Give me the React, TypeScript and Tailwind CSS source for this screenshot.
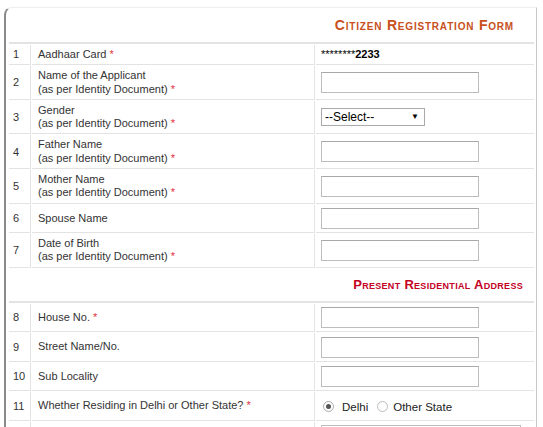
const rows = [
  { no: "1", label: ["Aadhaar Card"], req: true, kind: "text" },
  { no: "2", label: ["Name of the Applicant", "(as per Identity Document)"], req: true, kind: "input" },
  { no: "3", label: ["Gender", "(as per Identity Document)"], req: true, kind: "select" },
  { no: "4", label: ["Father Name", "(as per Identity Document)"], req: true, kind: "input" },
  { no: "5", label: ["Mother Name", "(as per Identity Document)"], req: true, kind: "input" },
  { no: "6", label: ["Spouse Name"], req: false, kind: "input" },
  { no: "7", label: ["Date of Birth", "(as per Identity Document)"], req: true, kind: "input" },
];

const addressRows = [
  { no: "8", label: ["House No."], req: true, kind: "input" },
  { no: "9", label: ["Street Name/No."], req: false, kind: "input" },
  { no: "10", label: ["Sub Locality"], req: false, kind: "input" },
  { no: "11", label: ["Whether Residing in Delhi or Other State?"], req: true, kind: "radio" },
];

type Row = (typeof rows)[number];

function Value({ kind }: { kind: string }) {
  if (kind === "text") {
    return (
      <span className="text-[11px] text-black">
        ********<b>2233</b>
      </span>
    );
  }
  if (kind === "select") {
    return (
      <div className="flex h-[18px] w-[104px] items-center justify-between border border-[#aaaaaa] bg-white pl-[3px] pr-[5px] text-[12px] text-black">
        <span>--Select--</span>
        <span className="text-[8px]">▼</span>
      </div>
    );
  }
  if (kind === "radio") {
    return (
      <div className="flex items-center pl-[2px] text-[11.5px] text-[#222]">
        <span className="flex h-[11px] w-[11px] items-center justify-center rounded-full border border-[#aaaaaa] bg-white">
          <span className="h-[5px] w-[5px] rounded-full bg-[#555]" />
        </span>
        <span className="ml-[8px] mt-[3px]">Delhi</span>
        <span className="ml-[9px] h-[11px] w-[11px] rounded-full border border-[#bbbbbb] bg-white" />
        <span className="ml-[5px] mt-[3px]">Other State</span>
      </div>
    );
  }
  return <div className="h-[21px] w-[158px] border border-[#bdbdbd] border-t-[#a8a8a8] bg-white" />;
}

function FormRow({ row }: { row: Row }) {
  const input = row.kind !== "text";
  return (
    <tr>
      <td className={`border-b border-r border-[#e3e3e3] pl-[4px] align-middle ${input ? "h-[28.5px]" : "h-[19px]"}`}>
        {row.no}
      </td>
      <td className="border-b border-r border-[#e3e3e3] py-[3px] pl-[6px] align-middle leading-[13.3px]">
        {row.label.map((l, i) => (
          <div key={l}>
            {l}
            {row.req && i === row.label.length - 1 && <span className="text-[#e0303f]"> *</span>}
          </div>
        ))}
      </td>
      <td className="border-b border-[#e3e3e3] pl-[5px] align-middle">
        <Value kind={row.kind} />
      </td>
    </tr>
  );
}

export default function App() {
  return (
    <div className="h-[427px] overflow-hidden bg-white pt-[7px] pl-[4px]" style={{ fontFamily: "'Liberation Sans', Arial, sans-serif" }}>
      <div className="w-[533px] rounded-tl-lg border-l-2 border-r border-t border-l-[#8a8a8a] border-r-[#c8c8c8] border-t-[#eeeeee] px-[2px]">
        <table className="w-[527px] border-separate border-spacing-[1px] text-[11px] text-[#333]">
          <colgroup>
            <col className="w-[22px]" />
            <col className="w-[283px]" />
            <col />
          </colgroup>
          <tbody>
            <tr>
              <td colSpan={3} className="h-[35px] border-b-2 border-[#e3e3e3] pr-[20px] text-right">
                <span className="text-[14px] font-bold tracking-[0.8px] text-[#c8501c] [font-variant:small-caps]">
                  Citizen Registration Form
                </span>
              </td>
            </tr>
            {rows.map((r) => (
              <FormRow key={r.no} row={r} />
            ))}
            <tr>
              <td colSpan={3} className="h-[34px] border-b-2 border-[#e3e3e3] pr-[11px] text-right">
                <span className="text-[13px] font-bold tracking-[0.3px] text-[#c4001e] [font-variant:small-caps]">
                  Present Residential Address
                </span>
              </td>
            </tr>
            {addressRows.map((r) => (
              <FormRow key={r.no} row={r} />
            ))}
            <tr>
              <td className="h-[30px] border-r border-[#e3e3e3]" />
              <td className="border-r border-[#e3e3e3]" />
              <td className="pl-[5px] pt-[3px] align-top">
                <div className="h-[21px] w-[200px] border border-[#bdbdbd] bg-white" />
              </td>
            </tr>
          </tbody>
        </table>
      </div>
    </div>
  );
}
